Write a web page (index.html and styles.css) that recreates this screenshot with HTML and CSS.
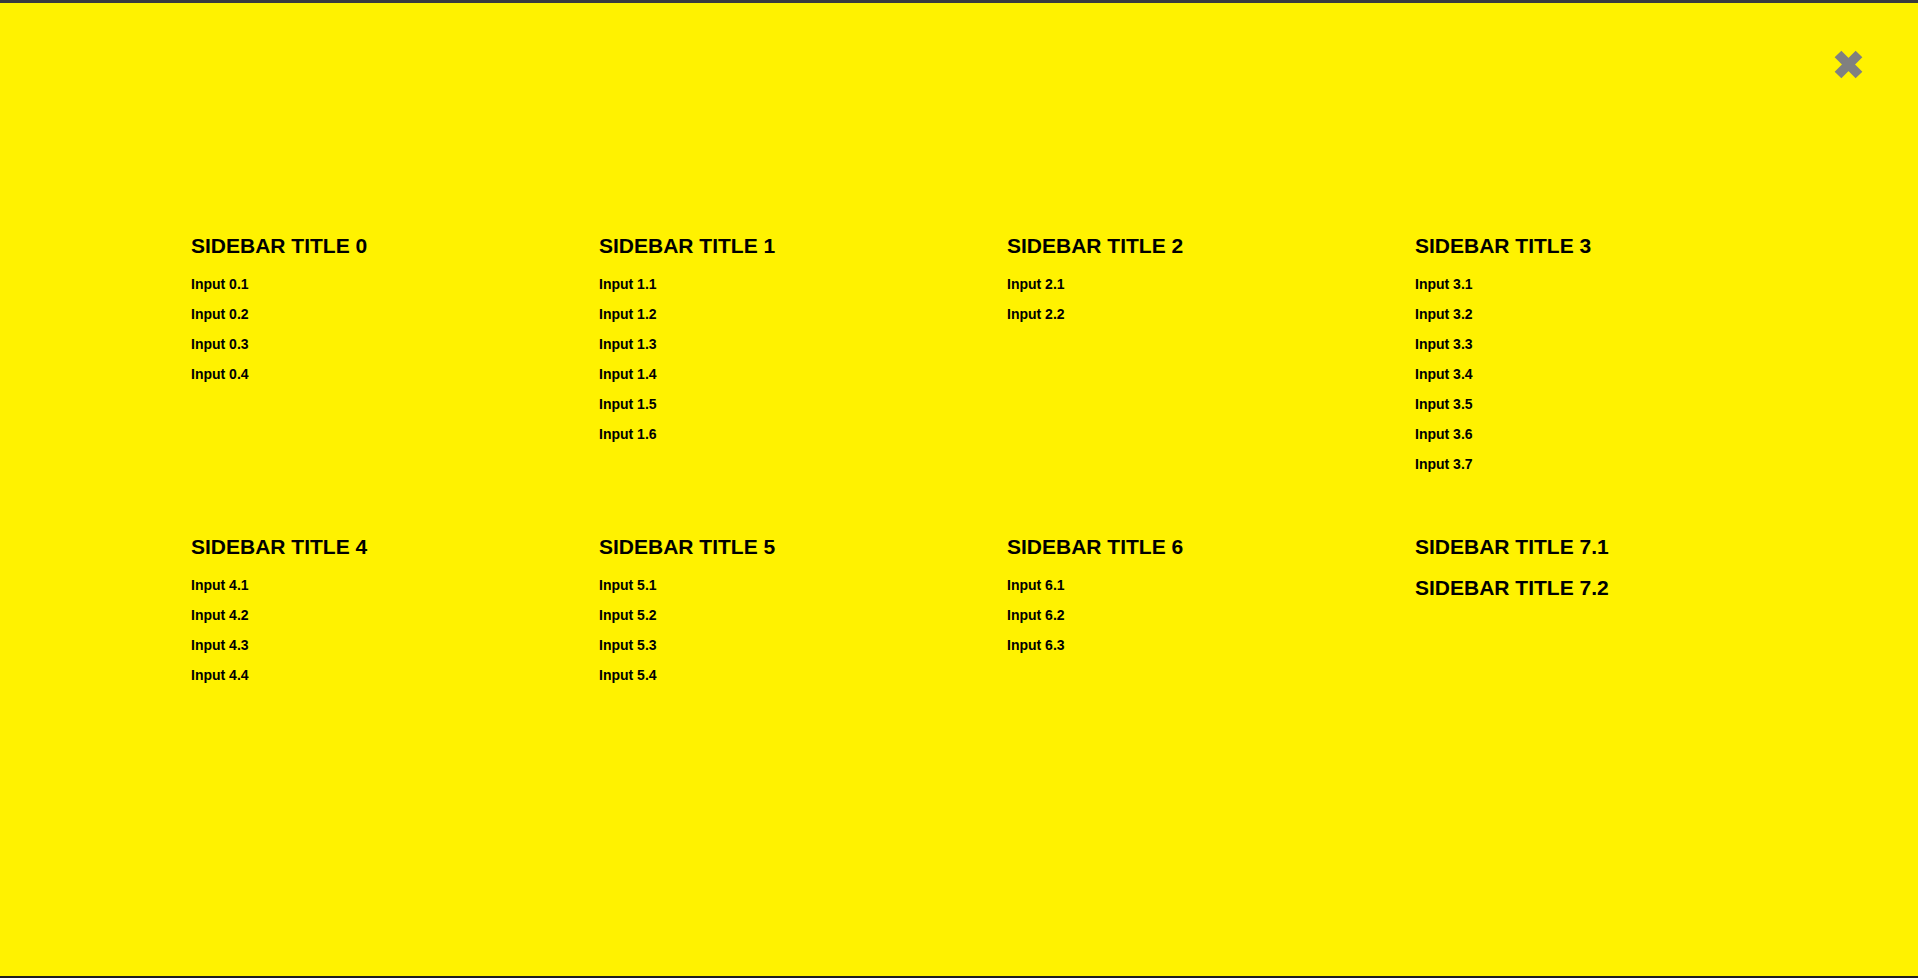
FILE: index.html
```html
<!DOCTYPE html>
<html lang="en">
<head>
    <meta charset="UTF-8">
    <meta name="viewport" content="width=device-width, initial-scale=1.0">
    <title>Sidebar Menu</title>
    <link rel="stylesheet" href="styles.css">
</head>
<body>

    <div class="overlay">
        <!-- Close button -->
        <button class="close-btn" aria-label="Close">
            <svg width="31" height="31" viewBox="0 0 31 31">
                <path d="M5 5 L26 26 M26 5 L5 26" stroke="#808080" stroke-width="9.5" fill="none"/>
            </svg>
        </button>

        <div class="menu-grid">
            <div class="menu-col">
                <div class="section">
                    <h3>SIDEBAR TITLE 0</h3>
                    <ul>
                        <li>Input 0.1</li>
                        <li>Input 0.2</li>
                        <li>Input 0.3</li>
                        <li>Input 0.4</li>
                    </ul>
                </div>
            </div>

            <div class="menu-col">
                <div class="section">
                    <h3>SIDEBAR TITLE 1</h3>
                    <ul>
                        <li>Input 1.1</li>
                        <li>Input 1.2</li>
                        <li>Input 1.3</li>
                        <li>Input 1.4</li>
                        <li>Input 1.5</li>
                        <li>Input 1.6</li>
                    </ul>
                </div>
            </div>

            <div class="menu-col">
                <div class="section">
                    <h3>SIDEBAR TITLE 2</h3>
                    <ul>
                        <li>Input 2.1</li>
                        <li>Input 2.2</li>
                    </ul>
                </div>
            </div>

            <div class="menu-col">
                <div class="section">
                    <h3>SIDEBAR TITLE 3</h3>
                    <ul>
                        <li>Input 3.1</li>
                        <li>Input 3.2</li>
                        <li>Input 3.3</li>
                        <li>Input 3.4</li>
                        <li>Input 3.5</li>
                        <li>Input 3.6</li>
                        <li>Input 3.7</li>
                    </ul>
                </div>
            </div>

            <div class="menu-col">
                <div class="section">
                    <h3>SIDEBAR TITLE 4</h3>
                    <ul>
                        <li>Input 4.1</li>
                        <li>Input 4.2</li>
                        <li>Input 4.3</li>
                        <li>Input 4.4</li>
                    </ul>
                </div>
            </div>

            <div class="menu-col">
                <div class="section">
                    <h3>SIDEBAR TITLE 5</h3>
                    <ul>
                        <li>Input 5.1</li>
                        <li>Input 5.2</li>
                        <li>Input 5.3</li>
                        <li>Input 5.4</li>
                    </ul>
                </div>
            </div>

            <div class="menu-col">
                <div class="section">
                    <h3>SIDEBAR TITLE 6</h3>
                    <ul>
                        <li>Input 6.1</li>
                        <li>Input 6.2</li>
                        <li>Input 6.3</li>
                    </ul>
                </div>
            </div>

            <div class="menu-col">
                <div class="section">
                    <h3>SIDEBAR TITLE 7.1</h3>
                    <ul></ul>
                </div>
                <div class="section">
                    <h3>SIDEBAR TITLE 7.2</h3>
                    <ul></ul>
                </div>
            </div>
        </div>
    </div>

</body>
</html>
```

FILE: styles.css
```css
html, body {
    margin: 0;
    padding: 0;
    height: 100%;
}

body {
    font-family: "Liberation Sans", Arial, sans-serif;
    background-color: #fff200;
    color: #000;
}

.overlay {
    position: relative;
    height: 100vh;
    box-sizing: border-box;
    border-top: 3px solid #3a3a3f;
    border-bottom: 2px solid #1f1f1f;
    padding: 231px 95px 0 191px;
}

.close-btn {
    position: absolute;
    top: 46px;
    right: 54px;
    width: 31px;
    height: 31px;
    padding: 0;
    border: none;
    background: none;
    cursor: pointer;
}

.close-btn svg {
    display: block;
}

.menu-grid {
    display: grid;
    grid-template-columns: repeat(4, 1fr);
    row-gap: 56px;
}

.section + .section {
    margin-top: 17px;
}

.section h3 {
    margin: 0 0 11px 0;
    font-size: 21px;
    line-height: 24px;
    font-weight: bold;
}

.section ul {
    list-style-type: none;
    margin: 0;
    padding: 0;
}

.section li {
    font-size: 14px;
    font-weight: bold;
    line-height: 30px;
}
```
